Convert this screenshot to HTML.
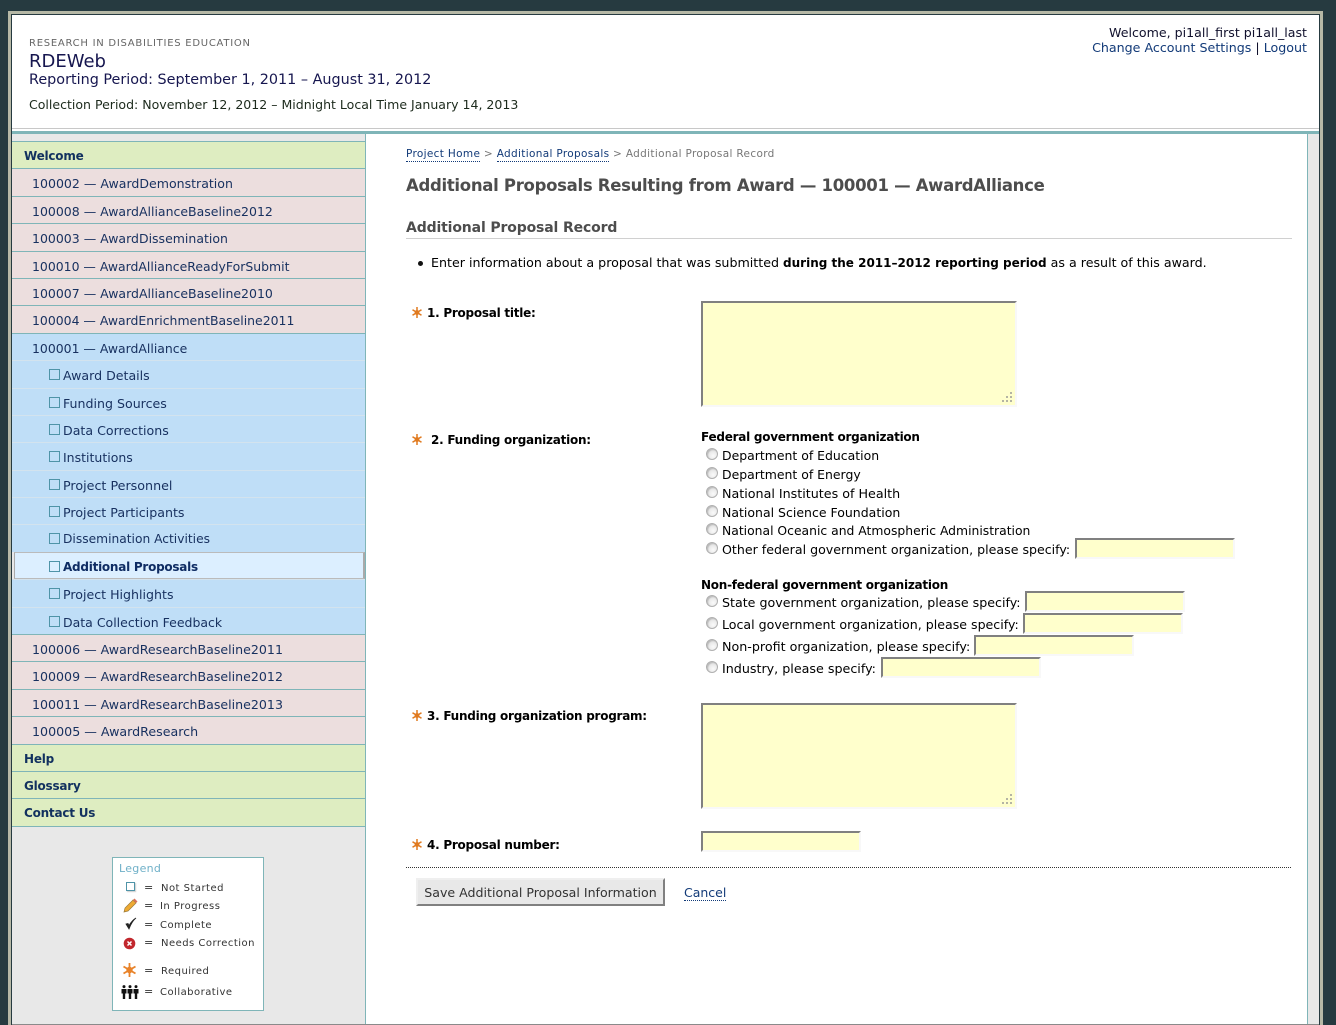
<!DOCTYPE html>
<html><head><meta charset="utf-8"><title>RDEWeb</title>
<style>
html,body{margin:0;padding:0;width:1336px;height:1025px;overflow:hidden;background:#263a40}
body{position:relative;font-family:"DejaVu Sans","Liberation Sans",sans-serif;font-size:12.45px;color:#000}
*{box-sizing:border-box}
.a{position:absolute;white-space:nowrap}
.t{position:absolute;white-space:nowrap;line-height:18px;height:18px}
a{color:#123a78;text-decoration:none}
#nav{position:absolute;left:12px;top:141px;width:353px}
#nav div{height:27.4px;line-height:29px;border-top:1px solid #7fb5b8;color:#17305f;white-space:nowrap;position:relative;font-size:12.5px}
#nav .g{background:#deedc1;font-weight:bold;padding-left:12px;color:#12315f;font-size:12px;letter-spacing:-.22px}
#nav .p{background:#ecdede;padding-left:20px}
#nav .b{background:#bfdef7;padding-left:20px}
#nav .s{background:#bfdef7;padding-left:51px;border-top:1px solid #d3e3ee;font-size:12.6px}
#nav .s:before{content:"";position:absolute;left:37px;top:8px;width:9px;height:9px;border:1px solid #4f94a8}
#nav .s.on{background:#dcefff;font-weight:bold;color:#0f2c63;border-top:1px solid #bbb;border-bottom:1px solid #bbb;margin:0 0 0 2px;padding-left:48px;border-left:1px solid #aaa;border-right:2px solid #aaa;font-size:12px;letter-spacing:-.25px}
#nav .s.on:before{left:34px}
#nav .e{height:1px;border-top:1px solid #7fb5b8}
.in{position:absolute;height:21px;background:#ffc;border:2px solid;border-color:#808080 #f8f8f8 #f8f8f8 #808080;padding:0;margin:0;outline:0;display:block}
textarea.in{width:316px;height:106px;resize:none;font:13px monospace}
.r{position:absolute;width:12px;height:12px;border-radius:50%;border:1px solid #b0b0b0;background:radial-gradient(circle at 62% 68%,#fafafa 0,#ececec 40%,#cfcfcf 100%);box-shadow:inset 1px 1px 1px #bbb}
.lb{font-weight:bold;color:#000;font-size:12px;letter-spacing:-.25px}
.lg{font-size:10px;letter-spacing:.48px;color:#333}
.eq{font-size:11px;color:#333}
svg{position:absolute;overflow:visible}
</style></head>
<body>
<!-- frame -->
<div class="a" style="left:8px;top:11px;width:1315px;height:1014px;background:#b6b8a6"></div>
<div class="a" style="left:11px;top:14px;width:1309px;height:1011px;background:#263a40"></div>
<div class="a" style="left:12px;top:15px;width:1307px;height:1009px;background:#e8e8e8"></div>
<div class="a" style="left:12px;top:1024px;width:1307px;height:1px;background:#8a8a8a"></div>
<!-- header -->
<div class="a" style="left:12px;top:15px;width:1307px;height:113px;background:#fff"></div>
<div class="a" style="left:12px;top:128px;width:1307px;height:3px;background:#fff;border-top:1px solid #c8c8c8"></div>
<div class="a" style="left:12px;top:131px;width:1307px;height:3px;background:#7fb5b8"></div>
<div class="t" style="left:29px;top:35px;font-size:10px;color:#666;letter-spacing:.74px">RESEARCH IN DISABILITIES EDUCATION</div>
<div class="t" style="left:29px;top:52px;font-size:18px;line-height:20px;height:20px;color:#16164f">RDEWeb</div>
<div class="t" style="left:29px;top:71px;font-size:14.36px;color:#16164f">Reporting Period: September 1, 2011 – August 31, 2012</div>
<div class="t" style="left:29px;top:96px;font-size:12.54px;color:#1c2a1c">Collection Period: November 12, 2012 – Midnight Local Time January 14, 2013</div>
<div class="t" style="right:29px;top:24px;color:#10102c;font-size:12.6px">Welcome, pi1all_first pi1all_last</div>
<div class="t" style="right:29px;top:39px;font-size:12.65px"><a>Change Account Settings</a> <span style="color:#10102c">|</span> <a>Logout</a></div>
<!-- content bg -->
<div class="a" style="left:365px;top:134px;width:943px;height:890px;background:#fff;border-left:1px solid #7fb5b8;border-right:1px solid #7fb5b8"></div>
<!-- nav -->
<div id="nav">
<div class="g">Welcome</div>
<div class="p" style="font-size:12.55px">100002 — AwardDemonstration</div>
<div class="p">100008 — AwardAllianceBaseline2012</div>
<div class="p">100003 — AwardDissemination</div>
<div class="p" style="font-size:12.45px">100010 — AwardAllianceReadyForSubmit</div>
<div class="p">100007 — AwardAllianceBaseline2010</div>
<div class="p" style="font-size:12.45px">100004 — AwardEnrichmentBaseline2011</div>
<div class="b" style="font-size:12.45px">100001 — AwardAlliance</div>
<div class="s">Award Details</div>
<div class="s">Funding Sources</div>
<div class="s">Data Corrections</div>
<div class="s" style="font-size:12.5px">Institutions</div>
<div class="s" style="font-size:12.7px">Project Personnel</div>
<div class="s" style="font-size:12.65px">Project Participants</div>
<div class="s" style="font-size:12.25px">Dissemination Activities</div>
<div class="s on">Additional Proposals</div>
<div class="s">Project Highlights</div>
<div class="s" style="font-size:12.5px">Data Collection Feedback</div>
<div class="p" style="font-size:12.6px">100006 — AwardResearchBaseline2011</div>
<div class="p" style="font-size:12.6px">100009 — AwardResearchBaseline2012</div>
<div class="p" style="font-size:12.6px">100011 — AwardResearchBaseline2013</div>
<div class="p" style="font-size:12.65px">100005 — AwardResearch</div>
<div class="g">Help</div>
<div class="g">Glossary</div>
<div class="g">Contact Us</div>
<div class="e"></div>
</div>
<!-- legend -->
<div class="a" style="left:112px;top:857px;width:152px;height:154px;background:#fff;border:1px solid #7fb5b8"></div>
<div class="t" style="left:119px;top:860px;font-size:11px;color:#6fb0c8;letter-spacing:.3px">Legend</div>
<div class="a" style="left:126px;top:882px;width:9px;height:9px;border:1px solid #4f94a8;box-shadow:1px 1px 1px #ccc"></div>
<svg style="left:123px;top:898px" width="15" height="15" viewBox="0 0 15 15"><path d="M1 14l1-4 8-8 3 3-8 8z" fill="#eeaa33" stroke="#9a7a3a" stroke-width=".7"/><path d="M10 2l1.500-1.500 3 3L13 5z" fill="#d9705a"/></svg>
<svg style="left:124px;top:917px" width="14" height="14" viewBox="0 0 14 14"><path d="M2 7l3 5C6.500 8 8.500 4 12 1 8.500 3 6.500 6 5 8.500L4 6.500z" fill="#222" stroke="#222" stroke-width=".8"/></svg>
<svg style="left:123px;top:937px" width="13" height="13" viewBox="0 0 13 13"><circle cx="6.500" cy="6.500" r="5.800" fill="#c1272d"/><path d="M4.500 4.500l4 4M8.500 4.500l-4 4" stroke="#fff" stroke-width="1.500"/></svg>
<svg style="left:123px;top:963px" width="13" height="14" viewBox="0 0 13 14"><path d="M6.500 0v14M.5 3.500l12 7M12.500 3.500l-12 7" stroke="#e8832a" stroke-width="1.800"/><circle cx="6.500" cy="7" r="3.200" fill="#e8832a"/></svg>
<svg style="left:121px;top:985px" width="18" height="14" viewBox="0 0 18 14" fill="#111"><circle cx="3" cy="1.600" r="1.500"/><path d="M.5 4h5v4.500H4.200V14H1.800V8.500H.5z"/><circle cx="9" cy="1.600" r="1.500"/><path d="M6.500 4h5v4.500h-1.300V14H7.800V8.500H6.500z"/><circle cx="15" cy="1.600" r="1.500"/><path d="M12.500 4h5v4.500h-1.300V14h-2.400V8.500h-1.300z"/></svg>
<div class="t eq" style="left:144px;top:879px">=</div><div class="t lg" style="left:161px;top:880px">Not Started</div>
<div class="t eq" style="left:144px;top:897px">=</div><div class="t lg" style="left:160px;top:898px">In Progress</div>
<div class="t eq" style="left:144px;top:916px">=</div><div class="t lg" style="left:160px;top:917px">Complete</div>
<div class="t eq" style="left:144px;top:934px">=</div><div class="t lg" style="left:161px;top:935px">Needs Correction</div>
<div class="t eq" style="left:144px;top:962px">=</div><div class="t lg" style="left:161px;top:963px">Required</div>
<div class="t eq" style="left:144px;top:983px">=</div><div class="t lg" style="left:160px;top:984px">Collaborative</div>
<!-- main -->
<div class="t" style="left:406px;top:145px;font-size:10.5px;color:#777;letter-spacing:.33px"><a style="border-bottom:1px dotted #123a78;padding-bottom:1px">Project Home</a> &gt; <a style="border-bottom:1px dotted #123a78;padding-bottom:1px">Additional Proposals</a> &gt; Additional Proposal Record</div>
<div class="t" style="left:406px;top:176px;font-size:16.5px;line-height:20px;height:20px;font-weight:bold;color:#4d4d4d;letter-spacing:-.3px">Additional Proposals Resulting from Award — 100001 — AwardAlliance</div>
<div class="t" style="left:406px;top:219px;font-size:14px;font-weight:bold;color:#4d4d4d;letter-spacing:-.14px">Additional Proposal Record</div>
<div class="a" style="left:406px;top:238px;width:886px;height:1px;background:#d0d0d0"></div>
<div class="a" style="left:418px;top:261px;width:5px;height:5px;border-radius:50%;background:#111"></div>
<div class="t" style="left:431px;top:254px;font-size:12.65px">Enter information about a proposal that was submitted <b style="font-size:12px">during the 2011–2012 reporting period</b> as a result of this award.</div>

<svg style="left:412px;top:307px" width="10" height="11" viewBox="0 0 10 11"><path d="M5 0v11M.5 2.700l9 5.600M9.500 2.700l-9 5.600" stroke="#e07a1f" stroke-width="1.500"/><circle cx="5" cy="5.500" r="2.400" fill="#e07a1f"/></svg>
<div class="t lb" style="left:427px;top:304px">1. Proposal title:</div>
<textarea class="in" style="left:701px;top:301px"></textarea>
<svg style="left:1002px;top:392px" width="11" height="11" fill="#b4b4a4"><rect x="8" y="0" width="2" height="2"/><rect x="4" y="4" width="2" height="2"/><rect x="8" y="4" width="2" height="2"/><rect x="0" y="8" width="2" height="2"/><rect x="4" y="8" width="2" height="2"/><rect x="8" y="8" width="2" height="2"/></svg>

<svg style="left:412px;top:434px" width="10" height="11" viewBox="0 0 10 11"><path d="M5 0v11M.5 2.700l9 5.600M9.500 2.700l-9 5.600" stroke="#e07a1f" stroke-width="1.500"/><circle cx="5" cy="5.500" r="2.400" fill="#e07a1f"/></svg>
<div class="t lb" style="left:431px;top:431px">2. Funding organization:</div>
<div class="t lb" style="left:701px;top:428px">Federal government organization</div>
<span class="r" style="left:706px;top:448px"></span><div class="t" style="left:722px;top:447px">Department of Education</div>
<span class="r" style="left:706px;top:467px"></span><div class="t" style="left:722px;top:466px">Department of Energy</div>
<span class="r" style="left:706px;top:486px"></span><div class="t" style="left:722px;top:485px;font-size:12.7px">National Institutes of Health</div>
<span class="r" style="left:706px;top:505px"></span><div class="t" style="left:722px;top:504px;font-size:12.5px">National Science Foundation</div>
<span class="r" style="left:706px;top:523px"></span><div class="t" style="left:722px;top:522px;font-size:12.36px">National Oceanic and Atmospheric Administration</div>
<span class="r" style="left:706px;top:542px"></span><div class="t" style="left:722px;top:541px;font-size:12.6px">Other federal government organization, please specify:</div>
<input class="in" style="left:1075px;top:538px;width:160px">
<div class="t lb" style="left:701px;top:576px">Non-federal government organization</div>
<span class="r" style="left:706px;top:595px"></span><div class="t" style="left:722px;top:594px;font-size:12.65px">State government organization, please specify:</div>
<input class="in" style="left:1025px;top:591px;width:160px">
<span class="r" style="left:706px;top:617px"></span><div class="t" style="left:722px;top:616px;font-size:12.6px">Local government organization, please specify:</div>
<input class="in" style="left:1023px;top:613px;width:160px">
<span class="r" style="left:706px;top:639px"></span><div class="t" style="left:722px;top:638px;font-size:12.7px">Non-profit organization, please specify:</div>
<input class="in" style="left:974px;top:635px;width:160px">
<span class="r" style="left:706px;top:661px"></span><div class="t" style="left:722px;top:660px;font-size:12.7px">Industry, please specify:</div>
<input class="in" style="left:881px;top:657px;width:160px">

<svg style="left:412px;top:710px" width="10" height="11" viewBox="0 0 10 11"><path d="M5 0v11M.5 2.700l9 5.600M9.500 2.700l-9 5.600" stroke="#e07a1f" stroke-width="1.500"/><circle cx="5" cy="5.500" r="2.400" fill="#e07a1f"/></svg>
<div class="t lb" style="left:427px;top:707px">3. Funding organization program:</div>
<textarea class="in" style="left:701px;top:703px"></textarea>
<svg style="left:1002px;top:794px" width="11" height="11" fill="#b4b4a4"><rect x="8" y="0" width="2" height="2"/><rect x="4" y="4" width="2" height="2"/><rect x="8" y="4" width="2" height="2"/><rect x="0" y="8" width="2" height="2"/><rect x="4" y="8" width="2" height="2"/><rect x="8" y="8" width="2" height="2"/></svg>

<svg style="left:412px;top:839px" width="10" height="11" viewBox="0 0 10 11"><path d="M5 0v11M.5 2.700l9 5.600M9.500 2.700l-9 5.600" stroke="#e07a1f" stroke-width="1.500"/><circle cx="5" cy="5.500" r="2.400" fill="#e07a1f"/></svg>
<div class="t lb" style="left:427px;top:836px">4. Proposal number:</div>
<input class="in" style="left:701px;top:831px;width:160px">

<div class="a" style="left:406px;top:867px;width:885px;height:1px;border-top:1px dotted #333"></div>
<div class="a" style="left:416px;top:878px;width:249px;height:28px;background:#e8e8e8;border:2px solid;border-color:#efefef #808080 #808080 #efefef;text-align:center;line-height:26px;color:#333;font-size:12.6px;white-space:nowrap">Save Additional Proposal Information</div>
<div class="a" style="left:684px;top:885px;height:16px;line-height:15px;font-size:12.5px;color:#123a78;border-bottom:1px dotted #123a78">Cancel</div>
</body></html>
